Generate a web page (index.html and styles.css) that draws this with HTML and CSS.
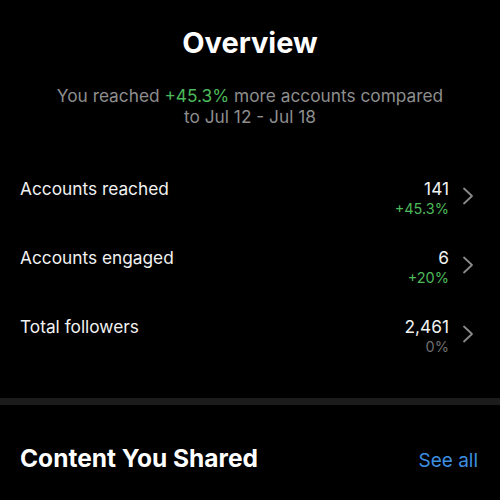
FILE: index.html
```html
<!DOCTYPE html>
<html lang="en">
<head>
  <meta charset="UTF-8">
  <meta name="viewport" content="width=device-width, initial-scale=1.0">
  <title>Insights</title>
  <link rel="stylesheet" href="styles.css">
</head>
<body>
  <!-- overview header -->
  <section class="overview">
    <h1>Overview</h1>
    <p class="summary">You reached <span class="up">+45.3%</span> more accounts compared to Jul 12 - Jul 18</p>
  </section>

  <!-- metric rows -->
  <ul class="metrics">
    <li class="metric">
      <span class="metric-label">Accounts reached</span>
      <span class="metric-values">
        <span class="metric-num">141</span>
        <span class="metric-change up">+45.3%</span>
      </span>
      <svg class="chevron" width="12" height="18" viewBox="0 0 12 18"><polyline points="2,1.5 10,9 2,16.5" fill="none" stroke="#8a8a8a" stroke-width="1.8" stroke-linecap="round" stroke-linejoin="round"/></svg>
    </li>
    <li class="metric">
      <span class="metric-label">Accounts engaged</span>
      <span class="metric-values">
        <span class="metric-num">6</span>
        <span class="metric-change up">+20%</span>
      </span>
      <svg class="chevron" width="12" height="18" viewBox="0 0 12 18"><polyline points="2,1.5 10,9 2,16.5" fill="none" stroke="#8a8a8a" stroke-width="1.8" stroke-linecap="round" stroke-linejoin="round"/></svg>
    </li>
    <li class="metric">
      <span class="metric-label">Total followers</span>
      <span class="metric-values">
        <span class="metric-num">2,461</span>
        <span class="metric-change">0%</span>
      </span>
      <svg class="chevron" width="12" height="18" viewBox="0 0 12 18"><polyline points="2,1.5 10,9 2,16.5" fill="none" stroke="#8a8a8a" stroke-width="1.8" stroke-linecap="round" stroke-linejoin="round"/></svg>
    </li>
  </ul>

  <div class="divider"></div>

  <!-- shared content header -->
  <section class="shared">
    <h2>Content You Shared</h2>
    <a class="see-all" href="#">See all</a>
  </section>
</body>
</html>
```

FILE: styles.css
```css
/* base */
body {
  margin: 0;
  background-color: #000;
  color: #f2f2f2;
  font-family: Inter, "Liberation Sans", sans-serif;
}

.up {
  color: #4cb95a;
}

/* overview header */
.overview {
  text-align: center;
  padding: 25px 50px 0;
}
.overview h1 {
  margin: 0;
  font-size: 29px;
  font-weight: 700;
  line-height: 36px;
  color: #fff;
}
.summary {
  margin: 24px 0 0;
  font-size: 17.3px;
  line-height: 21px;
  color: #8e8e8e;
}

/* metric rows */
.metrics {
  list-style: none;
  margin: 51px 0 0;
  padding: 0 20px;
}
.metric {
  display: flex;
  align-items: flex-start;
  height: 69px;
}
.metric-label {
  flex: 1;
  font-size: 17.3px;
  line-height: 22px;
}
.metric-values {
  display: flex;
  flex-direction: column;
  align-items: flex-end;
}
.metric-num {
  font-size: 17.3px;
  line-height: 22px;
}
.metric-change {
  font-size: 14.5px;
  line-height: 18px;
  color: #6e6e6e;
}
.metric-change.up {
  color: #4cb95a;
}
.chevron {
  margin: 9px 6px 0 13px;
}

.divider {
  margin-top: 13px;
  height: 7px;
  background-color: #1c1c1c;
}

/* shared content header */
.shared {
  display: flex;
  justify-content: space-between;
  align-items: baseline;
  padding: 38px 22px 0 20px;
}
.shared h2 {
  margin: 0;
  font-size: 24.5px;
  font-weight: 700;
  color: #fff;
}
.see-all {
  font-size: 19px;
  color: #3d8fe0;
  text-decoration: none;
}
```
